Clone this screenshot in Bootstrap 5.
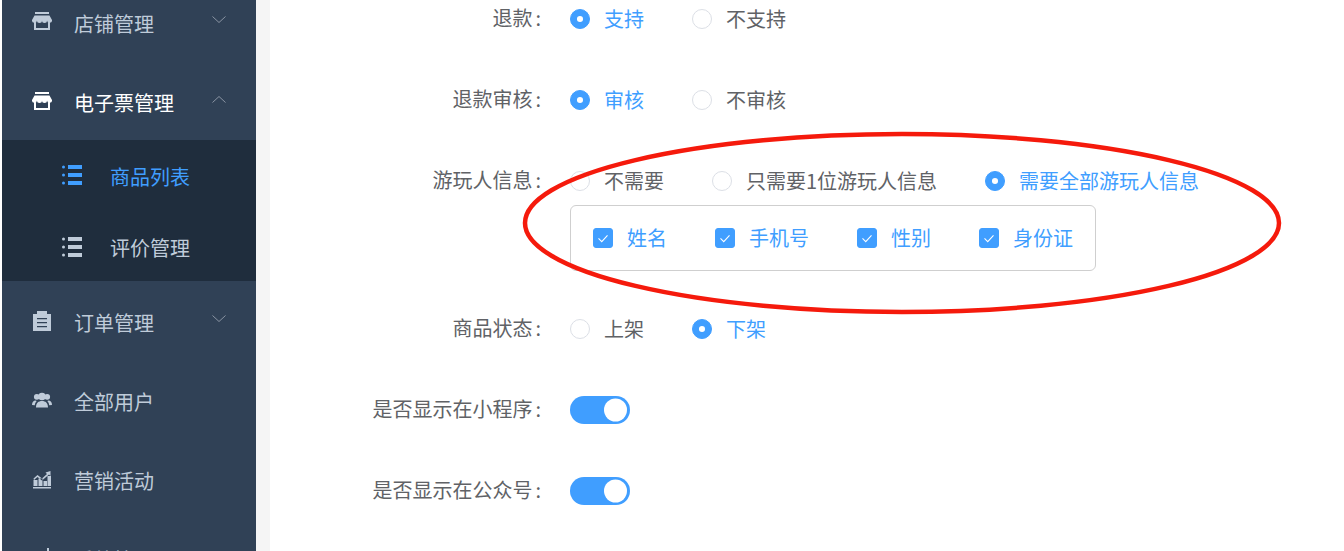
<!DOCTYPE html>
<html lang="zh">
<head>
<meta charset="utf-8">
<link href="https://cdn.jsdelivr.net/npm/bootstrap@5.3.0/dist/css/bootstrap.min.css" rel="stylesheet">
<style>
html,body{height:551px;overflow:hidden;background:#fff}
body{font-family:"Noto Sans CJK SC","Liberation Sans",sans-serif;font-size:20px;color:#606266}
.shell{height:551px;padding-left:2px}
.side{width:254px;background:#304156;flex:none;color:#bfcbd9;overflow:hidden}
.gutter{width:14px;background:#f5f5f5;flex:none}
.side-row{height:79px;padding:4px 30px 0}
.side-first{height:63px;padding:0 30px 16px}
.side-second{height:77px;padding-top:3px}
.side-row .ico{width:20px;height:20px;margin:0 22px 3px 0;flex:none;fill:currentColor}
.side-row .chev{width:14px;height:9px;flex:none;fill:none;stroke:#8a94a3;stroke-width:1;margin-bottom:8px}
.side-open{color:#fff}
.sub-list{background:#1f2d3d;height:141px}
.sub-row{height:70.5px;padding:3px 0 0 60px}
.sub-row + .sub-row{padding-top:5px}
.sub-row .ico{width:20px;height:20px;margin:0 28px 3px 0;fill:currentColor}
.sub-on{color:#409eff}
.f-row{position:relative}
.f-label{width:300px;text-align:right;flex:none;padding:0 29px 2px 0;line-height:26px}
.cln{margin-left:3px}
.f-body{min-width:0}
.r-item{display:flex;align-items:center;margin-right:48px;line-height:28px}
.r-item .form-check-input{margin:0 14px 0 0;width:20px;height:20px;flex:none;border:1px solid #dcdfe6;float:none}
.r-item .form-check-input:checked{background-color:#409eff;border-color:#409eff}
.r-item .form-check-input[type=radio]:checked{background-image:url("data:image/svg+xml,%3csvg xmlns='http://www.w3.org/2000/svg' viewBox='0 0 20 20'%3e%3ccircle cx='10' cy='10' r='3.4' fill='%23fff'/%3e%3c/svg%3e")}
.r-item .form-check-input[type=checkbox]{border-radius:3px}
.r-item .form-check-input[type=checkbox]:checked{background-image:url("data:image/svg+xml,%3csvg xmlns='http://www.w3.org/2000/svg' viewBox='0 0 20 20'%3e%3cpath d='M5 10.500l3.600 3.600L15 7' fill='none' stroke='%23fff' stroke-width='1.200'/%3e%3c/svg%3e")}
.r-on{color:#409eff}
.group-box{border:1px solid #cfcfcf;border-radius:6px;width:526px;height:66px;padding:0 22px;margin-top:10px}
.group-box .r-item:last-child{margin-right:0}
.tog .form-check-input{width:60px;height:28px;margin:0;float:none;border:0;border-radius:14px;background-color:#409eff;background-position:right center;background-size:contain;background-image:url("data:image/svg+xml,%3csvg xmlns='http://www.w3.org/2000/svg' viewBox='0 0 28 28'%3e%3ccircle cx='13.500' cy='14' r='11.500' fill='%23fff'/%3e%3c/svg%3e")}
.rw1{height:38px;margin-bottom:43px}
.rw2{height:38px;margin-bottom:48px}
.rw3{margin-bottom:44px}
.rw4{height:28px;margin-bottom:53px}
.ring{position:absolute;left:520px;top:129px;width:766px;height:188px;pointer-events:none}
</style>
</head>
<body>
<div class="shell d-flex">
  <nav class="side">
    <div class="side-row side-first d-flex align-items-center">
      <svg class="ico" viewBox="0 0 20 20"><path d="M3 0h14v2H3zM2.500 3.500h15L20 8a2.500 2.500 0 0 1-5 .6 2.500 2.500 0 0 1-5 0 2.500 2.500 0 0 1-5 0A2.500 2.500 0 0 1 0 8zM2 10h2v6h12v-6h2v8H2z"/></svg>
      <span class="flex-grow-1">店铺管理</span>
      <svg class="chev" viewBox="0 0 14 9"><path d="M.5 1.500 7 7.500 13.500 1.500"/></svg>
    </div>
    <div class="side-row side-second side-open d-flex align-items-center">
      <svg class="ico" viewBox="0 0 20 20"><path d="M3 0h14v2H3zM2.500 3.500h15L20 8a2.500 2.500 0 0 1-5 .6 2.500 2.500 0 0 1-5 0 2.500 2.500 0 0 1-5 0A2.500 2.500 0 0 1 0 8zM2 10h2v6h12v-6h2v8H2z"/></svg>
      <span class="flex-grow-1">电子票管理</span>
      <svg class="chev" viewBox="0 0 14 9"><path d="M.5 7.500 7 1.500 13.500 7.500"/></svg>
    </div>
    <div class="sub-list">
      <div class="sub-row sub-on d-flex align-items-center">
        <svg class="ico" viewBox="0 0 20 20"><path d="M6 0h14v4H6zM6 8h14v4H6zM6 16h14v4H6z"/><circle cx="1.500" cy="2" r="1.500"/><circle cx="1.500" cy="10" r="1.500"/><circle cx="1.500" cy="18" r="1.500"/></svg>
        <span>商品列表</span>
      </div>
      <div class="sub-row d-flex align-items-center">
        <svg class="ico" viewBox="0 0 20 20"><path d="M6 0h14v4H6zM6 8h14v4H6zM6 16h14v4H6z"/><circle cx="1.500" cy="2" r="1.500"/><circle cx="1.500" cy="10" r="1.500"/><circle cx="1.500" cy="18" r="1.500"/></svg>
        <span>评价管理</span>
      </div>
    </div>
    <div class="side-row d-flex align-items-center">
      <svg class="ico" viewBox="0 0 20 20"><path fill-rule="evenodd" d="M1 3h4V0h10v3h4v17H1zM5 7v1.300h10V7zM5 11v1.300h10V11zM5 15v1.300h10V15z"/></svg>
      <span class="flex-grow-1">订单管理</span>
      <svg class="chev" viewBox="0 0 14 9"><path d="M.5 1.500 7 7.500 13.500 1.500"/></svg>
    </div>
    <div class="side-row d-flex align-items-center">
      <svg class="ico" viewBox="0 0 20 20"><circle cx="10" cy="6.500" r="3.800"/><circle cx="4.800" cy="6.800" r="2.900"/><circle cx="15.200" cy="6.800" r="2.900"/><path d="M4 17.500c0-4.500 2.500-6.500 6-6.500s6 2 6 6.500zM0 15c0-2.800 1.500-4.500 3.500-4.500l1.200.6C3.500 12.300 3 13.700 2.800 15.300zM20 15c0-2.800-1.500-4.500-3.500-4.500l-1.200.6c1.200 1.200 1.700 2.600 1.900 4.200z"/></svg>
      <span>全部用户</span>
    </div>
    <div class="side-row d-flex align-items-center">
      <svg class="ico" viewBox="0 0 20 20"><path d="M1.500 17h4v-6h-4zM6.500 17h4V9.500h-4zM11.500 17h3.500v-5h-3.500zM15.500 17h3.500V7h-3.500zM1 18h18v1.500H1zM1.500 9.500l4-3.500 4.500 3.500L15 5l-1.500-1.500L18.500 2v5L17 5.500 10 11.500 5.500 8 2 11z"/></svg>
      <span>营销活动</span>
    </div>
    <div class="side-row d-flex align-items-center">
      <svg class="ico" viewBox="0 0 20 20"><path d="M15 0h2v4h-2z"/><circle cx="10" cy="11" r="8"/></svg>
      <span>系统管理</span>
    </div>
  </nav>
  <div class="gutter"></div>
  <main class="flex-grow-1">
    <div class="f-row d-flex align-items-center rw1">
      <div class="f-label">退款<span class="cln">:</span></div>
      <div class="d-flex f-body">
        <label class="r-item r-on"><input class="form-check-input" type="radio" name="a" checked>支持</label>
        <label class="r-item"><input class="form-check-input" type="radio" name="a">不支持</label>
      </div>
    </div>
    <div class="f-row d-flex align-items-center rw2">
      <div class="f-label">退款审核<span class="cln">:</span></div>
      <div class="d-flex f-body">
        <label class="r-item r-on"><input class="form-check-input" type="radio" name="b" checked>审核</label>
        <label class="r-item"><input class="form-check-input" type="radio" name="b">不审核</label>
      </div>
    </div>
    <div class="f-row d-flex align-items-start rw3">
      <div class="f-label">游玩人信息<span class="cln">:</span></div>
      <div class="f-body">
        <div class="d-flex">
          <label class="r-item"><input class="form-check-input" type="radio" name="c">不需要</label>
          <label class="r-item"><input class="form-check-input" type="radio" name="c">只需要1位游玩人信息</label>
          <label class="r-item r-on"><input class="form-check-input" type="radio" name="c" checked>需要全部游玩人信息</label>
        </div>
        <div class="group-box d-flex align-items-center">
          <label class="r-item r-on"><input class="form-check-input" type="checkbox" checked>姓名</label>
          <label class="r-item r-on"><input class="form-check-input" type="checkbox" checked>手机号</label>
          <label class="r-item r-on"><input class="form-check-input" type="checkbox" checked>性别</label>
          <label class="r-item r-on"><input class="form-check-input" type="checkbox" checked>身份证</label>
        </div>
      </div>
    </div>
    <div class="f-row d-flex align-items-center rw4">
      <div class="f-label">商品状态<span class="cln">:</span></div>
      <div class="d-flex f-body">
        <label class="r-item"><input class="form-check-input" type="radio" name="d">上架</label>
        <label class="r-item r-on"><input class="form-check-input" type="radio" name="d" checked>下架</label>
      </div>
    </div>
    <div class="f-row d-flex align-items-center rw4">
      <div class="f-label">是否显示在小程序<span class="cln">:</span></div>
      <div class="form-check form-switch tog p-0 m-0 d-flex"><input class="form-check-input" type="checkbox" role="switch" checked></div>
    </div>
    <div class="f-row d-flex align-items-center rw4">
      <div class="f-label">是否显示在公众号<span class="cln">:</span></div>
      <div class="form-check form-switch tog p-0 m-0 d-flex"><input class="form-check-input" type="checkbox" role="switch" checked></div>
    </div>
  </main>
</div>
<svg class="ring" viewBox="0 0 766 188"><ellipse cx="382" cy="94" rx="377" ry="89" fill="none" stroke="#f51a0c" stroke-width="4.500"/></svg>
<script src="https://cdn.jsdelivr.net/npm/bootstrap@5.3.0/dist/js/bootstrap.bundle.min.js"></script>
</body>
</html>
